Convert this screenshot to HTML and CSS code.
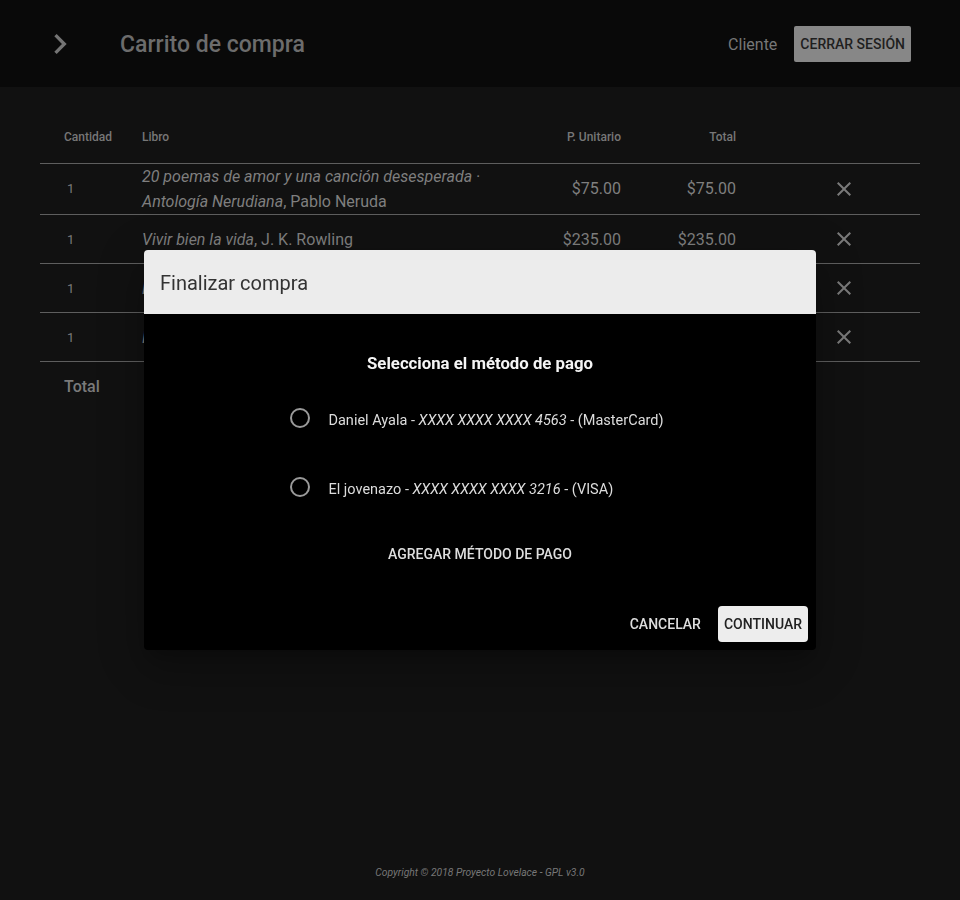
FILE: index.html
```html
<!DOCTYPE html>
<html lang="es">
<head>
<meta charset="utf-8">
<title>Carrito de compra</title>
<link rel="stylesheet" href="styles.css">
</head>
<body>
<div class="page">
  <header class="appbar">
    <button class="icon-btn menu-btn" aria-label="menu">
      <svg viewBox="0 0 24 24" width="40" height="40"><path d="M10 6L8.59 7.41 13.17 12l-4.58 4.59L10 18l6-6z"/></svg>
    </button>
    <h1 class="app-title">Carrito de compra</h1>
    <div class="appbar-right">
      <span class="user">Cliente</span>
      <button class="logout">CERRAR SESIÓN</button>
    </div>
  </header>

  <main class="content">
    <table class="cart">
      <thead>
        <tr>
          <th class="c-qty">Cantidad</th>
          <th class="c-book">Libro</th>
          <th class="c-num">P. Unitario</th>
          <th class="c-num c-total">Total</th>
          <th class="c-del"></th>
        </tr>
      </thead>
      <tbody>
        <tr class="tall">
          <td class="c-qty q">1</td>
          <td class="c-book"><i>20 poemas de amor y una canción desesperada · Antología Nerudiana</i>, Pablo Neruda</td>
          <td class="c-num">$75.00</td>
          <td class="c-num c-total">$75.00</td>
          <td class="c-del"><svg viewBox="0 0 24 24" width="24" height="24"><path d="M19 6.41L17.59 5 12 10.59 6.41 5 5 6.41 10.59 12 5 17.59 6.41 19 12 13.41 17.59 19 19 17.59 13.41 12z"/></svg></td>
        </tr>
        <tr>
          <td class="c-qty q">1</td>
          <td class="c-book"><i>Vivir bien la vida</i>, J. K. Rowling</td>
          <td class="c-num">$235.00</td>
          <td class="c-num c-total">$235.00</td>
          <td class="c-del"><svg viewBox="0 0 24 24" width="24" height="24"><path d="M19 6.41L17.59 5 12 10.59 6.41 5 5 6.41 10.59 12 5 17.59 6.41 19 12 13.41 17.59 19 19 17.59 13.41 12z"/></svg></td>
        </tr>
        <tr>
          <td class="c-qty q">1</td>
          <td class="c-book"><i>Memorias de Idhún</i>, Laura Gallego</td>
          <td class="c-num">$180.00</td>
          <td class="c-num c-total">$180.00</td>
          <td class="c-del"><svg viewBox="0 0 24 24" width="24" height="24"><path d="M19 6.41L17.59 5 12 10.59 6.41 5 5 6.41 10.59 12 5 17.59 6.41 19 12 13.41 17.59 19 19 17.59 13.41 12z"/></svg></td>
        </tr>
        <tr>
          <td class="c-qty q">1</td>
          <td class="c-book"><i>Marina</i>, Carlos Ruiz Zafón</td>
          <td class="c-num">$150.00</td>
          <td class="c-num c-total">$150.00</td>
          <td class="c-del"><svg viewBox="0 0 24 24" width="24" height="24"><path d="M19 6.41L17.59 5 12 10.59 6.41 5 5 6.41 10.59 12 5 17.59 6.41 19 12 13.41 17.59 19 19 17.59 13.41 12z"/></svg></td>
        </tr>
      </tbody>
      <tfoot>
        <tr>
          <td class="c-qty total-label" colspan="2">Total</td>
          <td class="c-num"></td>
          <td class="c-num c-total">$640.00</td>
          <td class="c-del"></td>
        </tr>
      </tfoot>
    </table>
  </main>

  <footer class="footer">Copyright © 2018 Proyecto Lovelace - GPL v3.0</footer>
</div>

<div class="backdrop">
  <div class="dialog" role="dialog">
    <div class="dialog-title">Finalizar compra</div>
    <div class="dialog-body">
      <h2 class="pay-heading">Selecciona el método de pago</h2>
      <div class="radio-group">
        <label class="option"><span class="radio"></span><span class="opt-label">Daniel Ayala - <i>XXXX XXXX XXXX 4563</i> - (MasterCard)</span></label>
        <label class="option"><span class="radio"></span><span class="opt-label">El jovenazo - <i>XXXX XXXX XXXX 3216</i> - (VISA)</span></label>
      </div>
      <button class="text-btn add-btn">AGREGAR MÉTODO DE PAGO</button>
    </div>
    <div class="dialog-actions">
      <button class="text-btn">CANCELAR</button>
      <button class="contained-btn">CONTINUAR</button>
    </div>
  </div>
</div>
</body>
</html>
```
FILE: styles.css
```css
* { box-sizing: border-box; }
html, body { margin: 0; padding: 0; }
body {
  background: #111111;
  font-family: Roboto, "Liberation Sans", Arial, sans-serif;
  color: #7d7d7d;
}
button { font-family: inherit; border: 0; background: none; cursor: pointer; }

.page {
  min-height: 100vh;
  display: flex;
  flex-direction: column;
}

.appbar {
  height: 87px;
  background: #090909;
  display: flex;
  align-items: center;
  padding: 0 49px 0 36px;
}
.icon-btn {
  width: 48px;
  height: 48px;
  padding: 0;
  display: flex;
  align-items: center;
  justify-content: center;
}
.icon-btn svg { fill: #747474; display: block; }
.app-title {
  margin: 2px 0 0 36px;
  font-size: 23px;
  font-weight: 500;
  color: #6c6c6c;
  flex: 1;
}
.appbar-right {
  display: flex;
  align-items: center;
  gap: 17px;
}
.user { font-size: 16px; color: #777777; padding-top: 2px; }
.logout {
  height: 36px;
  padding: 0 6px;
  background: #878787;
  color: #1f1f1f;
  font-size: 14px;
  font-weight: 500;
  border-radius: 2px;
}

.content { padding: 20px 40px 0; }
.cart {
  width: 100%;
  border-collapse: collapse;
  table-layout: fixed;
}
.cart th {
  height: 56px;
  font-size: 12px;
  font-weight: 500;
  color: #777777;
  text-align: left;
  padding: 4px 0 0;
  border-bottom: 1px solid #5e5e5e;
}
.cart td {
  height: 49px;
  padding: 1px 0 0;
  font-size: 16px;
  line-height: 25px;
  color: #7f7f7f;
  border-bottom: 1px solid #5e5e5e;
}
.cart tr.tall td { height: 50px; padding-top: 0; }
.cart tfoot td { border-bottom: 0; height: 50px; }
.c-qty { width: 102px; padding-left: 24px !important; }
.q { font-size: 13px !important; padding-left: 27px !important; color: #7a7a7a !important; }
.c-book { width: 358px; padding-right: 14px !important; }
.c-num { width: 121px; text-align: right !important; }
.c-total { width: 115px; }
.c-del { padding-left: 96px !important; }
.c-del svg { display: block; fill: #7a7a7a; }
.total-label { font-weight: 500; color: #7a7a7a !important; }

.footer {
  margin-top: auto;
  text-align: center;
  font-size: 10.3px;
  font-style: italic;
  line-height: 14px;
  color: #777777;
  padding-bottom: 20px;
}

.backdrop {
  position: fixed;
  inset: 0;
  display: flex;
  align-items: center;
  justify-content: center;
}
.dialog {
  width: 672px;
  height: 400px;
  background: #000000;
  border-radius: 4px;
  display: flex;
  flex-direction: column;
  overflow: hidden;
  box-shadow: 0 11px 15px -7px rgba(0,0,0,.2), 0 24px 38px 3px rgba(0,0,0,.14), 0 9px 46px 8px rgba(0,0,0,.12);
}
.dialog-title {
  height: 64px;
  background: #ececec;
  color: #333333;
  font-size: 20px;
  padding: 2px 16px 0;
  display: flex;
  align-items: center;
}
.dialog-body {
  flex: 1;
  display: flex;
  flex-direction: column;
  align-items: center;
  padding-top: 38px;
}
.pay-heading {
  margin: 0;
  font-size: 16.75px;
  line-height: 22px;
  font-weight: 700;
  color: #f5f5f5;
}
.radio-group {
  margin-top: 20px;
  display: flex;
  flex-direction: column;
  gap: 21px;
  padding-right: 6px;
}
.option {
  height: 48px;
  display: flex;
  align-items: center;
}
.radio {
  width: 20px;
  height: 20px;
  border: 2px solid #9a9a9a;
  border-radius: 50%;
  margin-right: 18px;
  flex: none;
}
.opt-label {
  font-size: 14.5px;
  color: #dcdcdc;
  padding-top: 4px;
}
.text-btn {
  height: 36px;
  padding: 0 8px;
  font-size: 14px;
  font-weight: 500;
  color: #dedede;
}
.add-btn { margin-top: 25px; }
.dialog-actions {
  display: flex;
  justify-content: flex-end;
  align-items: center;
  gap: 9px;
  padding: 0 8px 8px;
}
.contained-btn {
  height: 36px;
  padding: 0 6px;
  background: #ededed;
  color: #222222;
  font-size: 14px;
  font-weight: 500;
  border-radius: 4px;
}
```
